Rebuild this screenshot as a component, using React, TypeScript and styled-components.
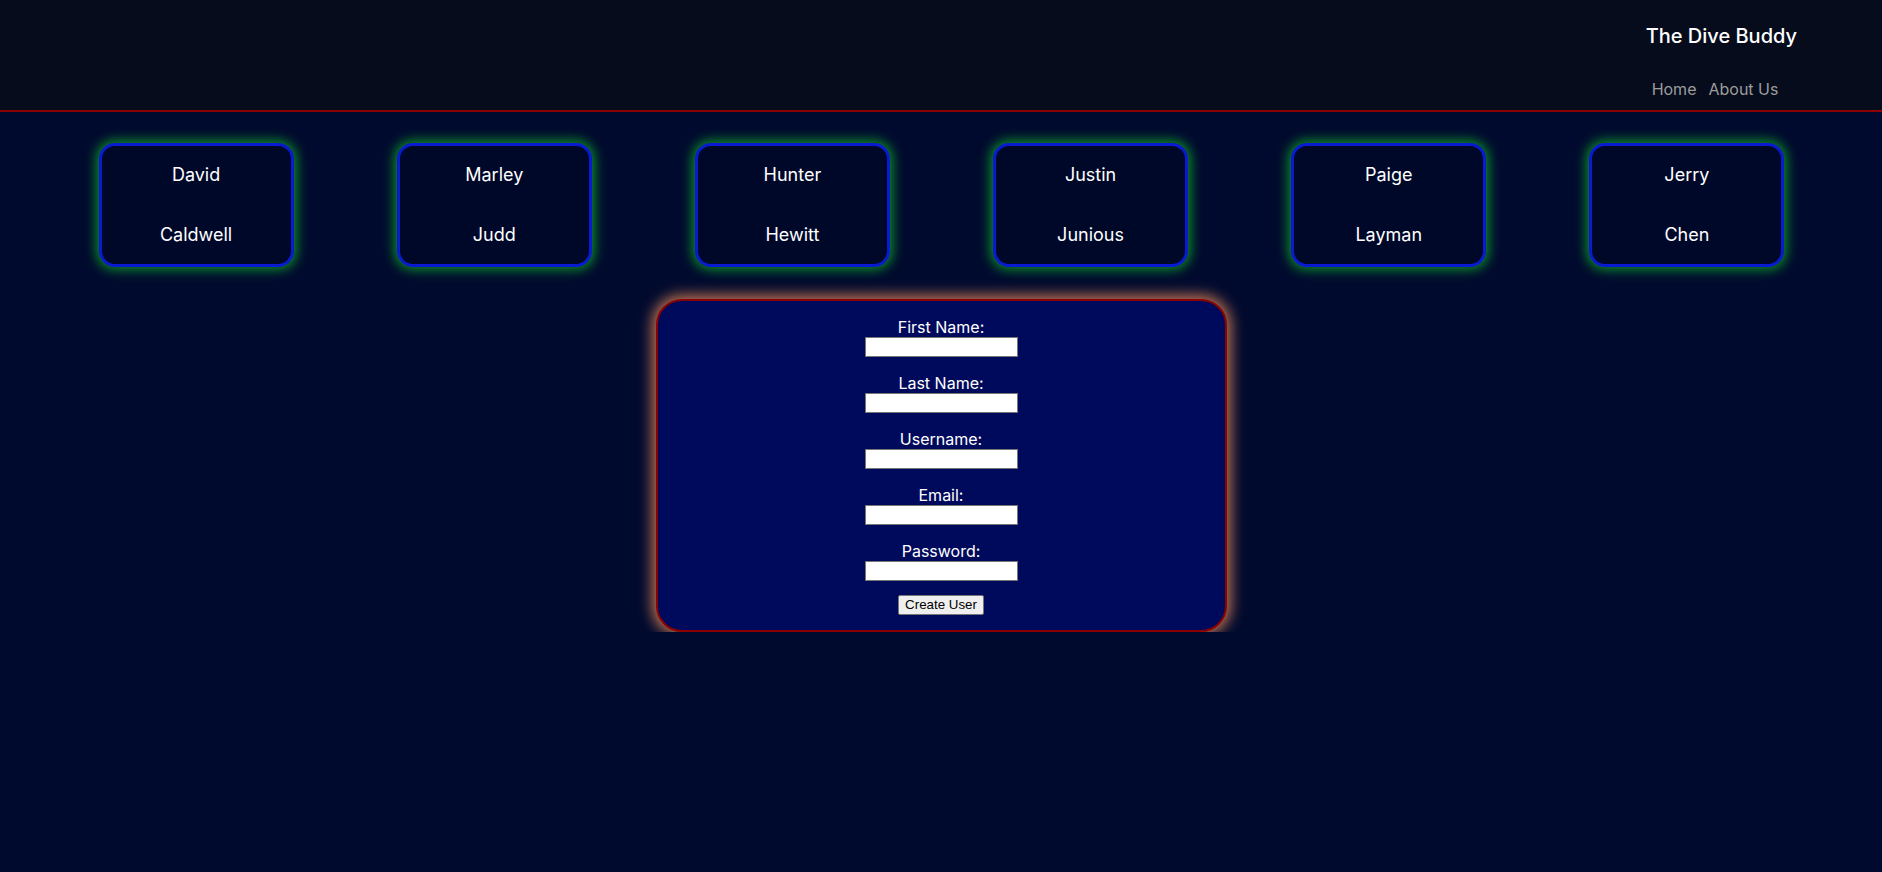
import React from "react";
import styled, { createGlobalStyle } from "styled-components";

const GlobalStyle = createGlobalStyle`
  html, body {
    margin: 0;
    padding: 0;
    background: #000a2e;
    font-family: Inter, "Noto Sans", "Liberation Sans", sans-serif;
    color: #ffffff;
  }
  * { box-sizing: border-box; }
`;

const Header = styled.header`
  height: 112px;
  background: #060c1c;
  border-bottom: 2px solid #8b0000;
  display: flex;
  justify-content: flex-end;
  padding-right: 85px;
`;

const Brand = styled.div`
  display: flex;
  flex-direction: column;
  align-items: flex-start;
`;

const Title = styled.div`
  font-size: 20px;
  line-height: 24px;
  margin-top: 24px;
  color: #ffffff;
  font-weight: 500;
`;

const Nav = styled.nav`
  display: flex;
  gap: 12px;
  margin-top: 31px;
  margin-left: 6px;
`;

const NavLink = styled.a`
  font-size: 16px;
  line-height: 20px;
  color: #9d9d9d;
  text-decoration: none;
`;

const CardRow = styled.div`
  display: flex;
  justify-content: space-around;
  padding: 31px 46px 0 47px;
`;

const Card = styled.div`
  width: 195px;
  height: 124px;
  border: 3px solid #0a1ad0;
  border-radius: 16px;
  background: #00082a;
  box-shadow: 0 0 12px 3px #0b8a2a;
  display: flex;
  flex-direction: column;
  align-items: center;
  padding-top: 18px;
`;

const CardName = styled.div<{ $last?: boolean }>`
  font-size: 18px;
  line-height: 22px;
  margin-top: ${(p) => (p.$last ? "38px" : "0")};
`;

const Form = styled.form`
  width: 571px;
  margin: 32px auto 0;
  background: #000a5c;
  border: 2px solid #8b0000;
  border-radius: 26px;
  box-shadow: 0 0 14px 4px rgba(255, 150, 90, 0.75);
  display: flex;
  flex-direction: column;
  align-items: center;
  padding: 17px 0 15px;
`;

const Field = styled.div`
  display: flex;
  flex-direction: column;
  align-items: center;
  margin-bottom: 17px;
  &:last-of-type {
    margin-bottom: 14px;
  }
`;

const Label = styled.label`
  font-size: 16px;
  line-height: 19px;
  color: #ffffff;
`;

const Input = styled.input`
  width: 153px;
  height: 20px;
  border: 1px solid #767676;
  background: #ffffff;
  padding: 1px 2px;
  font-family: "Liberation Sans", Arial, sans-serif;
  font-size: 13.33px;
`;

const Button = styled.button`
  height: 20px;
  padding: 0 6px;
  white-space: nowrap;
  font-family: "Liberation Sans", Arial, sans-serif;
  font-size: 13.33px;
  line-height: 16px;
  color: #000000;
  background: #efefef;
  border: 1px solid #767676;
  border-radius: 2px;
`;

const people = [
  ["David", "Caldwell"],
  ["Marley", "Judd"],
  ["Hunter", "Hewitt"],
  ["Justin", "Junious"],
  ["Paige", "Layman"],
  ["Jerry", "Chen"],
];

const fields = [
  ["firstName", "First Name:", "text"],
  ["lastName", "Last Name:", "text"],
  ["username", "Username:", "text"],
  ["email", "Email:", "text"],
  ["password", "Password:", "password"],
];

export default function App() {
  return (
    <>
      <GlobalStyle />
      <Header>
        <Brand>
          <Title>The Dive Buddy</Title>
          <Nav>
            <NavLink href="#">Home</NavLink>
            <NavLink href="#">About Us</NavLink>
          </Nav>
        </Brand>
      </Header>
      <CardRow>
        {people.map(([f, l]) => (
          <Card key={f}>
            <CardName>{f}</CardName>
            <CardName $last>{l}</CardName>
          </Card>
        ))}
      </CardRow>
      <Form onSubmit={(e) => e.preventDefault()}>
        {fields.map(([id, label, type]) => (
          <Field key={id}>
            <Label htmlFor={id}>{label}</Label>
            <Input id={id} type={type} />
          </Field>
        ))}
        <Button type="submit">Create User</Button>
      </Form>
    </>
  );
}
